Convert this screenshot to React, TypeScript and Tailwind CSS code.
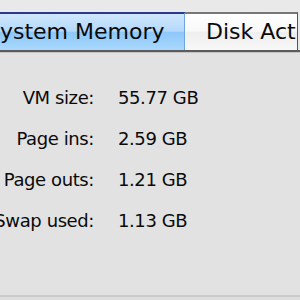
import React from "react";

const rows = [
  ["VM size:", "55.77 GB"],
  ["Page ins:", "2.59 GB"],
  ["Page outs:", "1.21 GB"],
  ["Swap used:", "1.13 GB"],
];

export default function App() {
  return (
    <div
      className="w-[300px] h-[300px] overflow-hidden bg-[#e2e2e2] flex flex-col text-[#0a0a0a]"
      style={{ fontFamily: '"DejaVu Sans", Verdana, sans-serif' }}
    >
      <div className="h-[12px] bg-[#e9e9e9]" />
      <div className="flex h-[38px] w-[300px] overflow-hidden bg-[#e9e9e9]">
        <div className="ml-[-36px] w-[221px] shrink-0 border-t-2 border-[#2b3990] border-r border-r-[#6ea6db] bg-[linear-gradient(to_bottom,#cfe7fd_0%,#b4d9fb_48%,#8ec7f9_50%,#a9d8fd_100%)] flex items-center pl-[22px] pb-[1px] text-[22px] whitespace-nowrap overflow-hidden">
          System Memory
        </div>
        <div className="w-[113px] shrink-0 border-t-2 border-[#777] border-r border-r-[#555] bg-[linear-gradient(to_bottom,#ffffff_0%,#f8f8f8_48%,#eeeeee_50%,#f8f8f8_100%)] flex items-center pl-[21px] pb-[1px] text-[22px] whitespace-nowrap overflow-hidden">
          Disk Activity
        </div>
      </div>
      <div className="h-[2px] bg-[#5c5c5c]" />
      <div className="h-[1px] bg-[#c4c4c4]" />
      <div className="flex-1 flex flex-col pt-[24px] text-[18px] tracking-[-0.4px]">
        {rows.map(([l, v]) => (
          <div key={l} className="flex h-[41px] items-center">
            <div className="w-[94px] shrink-0 flex justify-end whitespace-nowrap">
              <span>{l}</span>
            </div>
            <div className="ml-[24px] whitespace-nowrap">{v}</div>
          </div>
        ))}
      </div>
      <div className="h-[2px] bg-[#cacaca]" />
      <div className="h-[3px] bg-[#dedede]" />
    </div>
  );
}
